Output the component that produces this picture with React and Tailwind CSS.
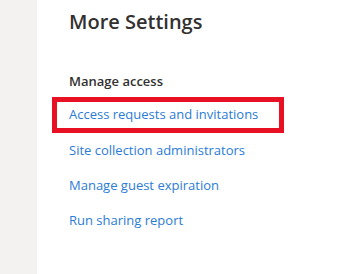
const links = [
  "Access requests and invitations",
  "Site collection administrators",
  "Manage guest expiration",
  "Run sharing report",
];

export default function App() {
  return (
    <div className="flex h-[274px] w-[345px] bg-white font-['Open_Sans',sans-serif]">
      <div className="w-[37px] shrink-0 bg-[#f3f2f1]" />
      <div className="pl-[15px] pt-[9px]">
        <h1 className="pl-[17px] text-[20px] leading-[26px] font-semibold text-[#323130]">
          More Settings
        </h1>
        <h2 className="mt-[37px] pl-[17px] text-[13px] leading-[18px] font-semibold text-[#323130]">
          Manage access
        </h2>
        <ul className="mt-[7px]">
          {links.map((label, i) => (
            <li
              key={label}
              className={
                i === 0
                  ? "flex h-[36px] w-[232px] items-center border-[5px] border-[#e81123] pl-[12px]"
                  : "flex h-[35px] w-[232px] items-center border-[5px] border-transparent pl-[12px]"
              }
            >
              <a href="#" className="text-[13px] text-[#2b7cd6]">
                {label}
              </a>
            </li>
          ))}
        </ul>
      </div>
    </div>
  );
}
